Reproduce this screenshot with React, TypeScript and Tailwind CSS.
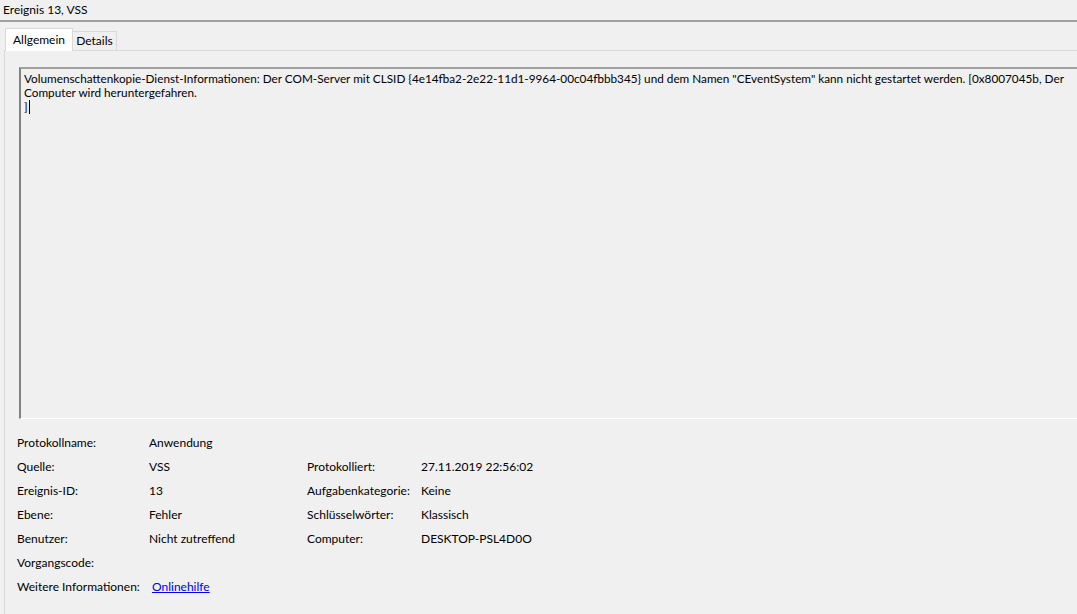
export default function App() {
  const left: [string, string][] = [
    ["Protokollname:", "Anwendung"],
    ["Quelle:", "VSS"],
    ["Ereignis-ID:", "13"],
    ["Ebene:", "Fehler"],
    ["Benutzer:", "Nicht zutreffend"],
    ["Vorgangscode:", ""],
  ];
  const right: [string, string][] = [
    ["Protokolliert:", "27.11.2019 22:56:02"],
    ["Aufgabenkategorie:", "Keine"],
    ["Schlüsselwörter:", "Klassisch"],
    ["Computer:", "DESKTOP-PSL4D0O"],
  ];

  return (
    <div
      className="h-[614px] w-[1077px] overflow-hidden bg-[#f0f0f0] text-[12px] text-black"
      style={{ fontFamily: 'Lato, sans-serif' }}
    >
      {/* title */}
      <div className="h-[20px] pl-[3px] leading-[20px]">Ereignis 13, VSS</div>
      <div className="h-[2px] bg-[#a0a0a0]" />

      {/* tabs */}
      <div className="mt-[6px] flex h-[22px] items-end pl-[5px]">
        <div className="relative z-10 -mb-px flex h-[23px] w-[68px] items-center justify-center border border-b-0 border-[#d9d9d9] bg-white">
          Allgemein
        </div>
        <div className="flex h-[19px] w-[44px] items-center justify-center border border-l-0 border-b-0 border-[#d9d9d9] bg-[#f0f0f0]">
          Details
        </div>
      </div>

      {/* panel */}
      <div className="ml-[4px] h-[600px] border-l border-t border-[#d9d9d9] pl-[14px] pt-[16px]">
        <div className="h-[352px] w-[1100px] border-l-2 border-t-2 border-l-[#828282] border-t-[#a0a0a0] border-b border-b-white pl-[3px] pt-[3px] text-[11.75px] leading-[14px]">
          <div className="w-[1045px]">
            Volumenschattenkopie-Dienst-Informationen: Der COM-Server mit CLSID {"{"}4e14fba2-2e22-11d1-9964-00c04fbbb345{"}"} und dem Namen "CEventSystem" kann nicht gestartet werden. [0x8007045b, Der Computer wird heruntergefahren.
          </div>
          <div className="flex items-center">
            <span>]</span>
            <span className="ml-[1px] inline-block h-[14px] w-px bg-black" />
          </div>
        </div>

        <div className="-ml-[2px] mt-[12px] flex">
          <div className="flex flex-col">
            {left.map(([k, v]) => (
              <div key={k} className="flex h-[24px] items-center whitespace-nowrap">
                <span className="w-[132px] shrink-0">{k}</span>
                <span className="w-[158px] shrink-0">{v}</span>
              </div>
            ))}
            <div className="flex h-[24px] items-center whitespace-nowrap">
              <span className="w-[135px] shrink-0">Weitere Informationen:</span>
              <span className="text-[#0000ee] underline">Onlinehilfe</span>
            </div>
          </div>
          <div className="flex flex-col pt-[24px]">
            {right.map(([k, v]) => (
              <div key={k} className="flex h-[24px] items-center whitespace-nowrap">
                <span className="w-[114px] shrink-0">{k}</span>
                <span>{v}</span>
              </div>
            ))}
          </div>
        </div>
      </div>
    </div>
  );
}
